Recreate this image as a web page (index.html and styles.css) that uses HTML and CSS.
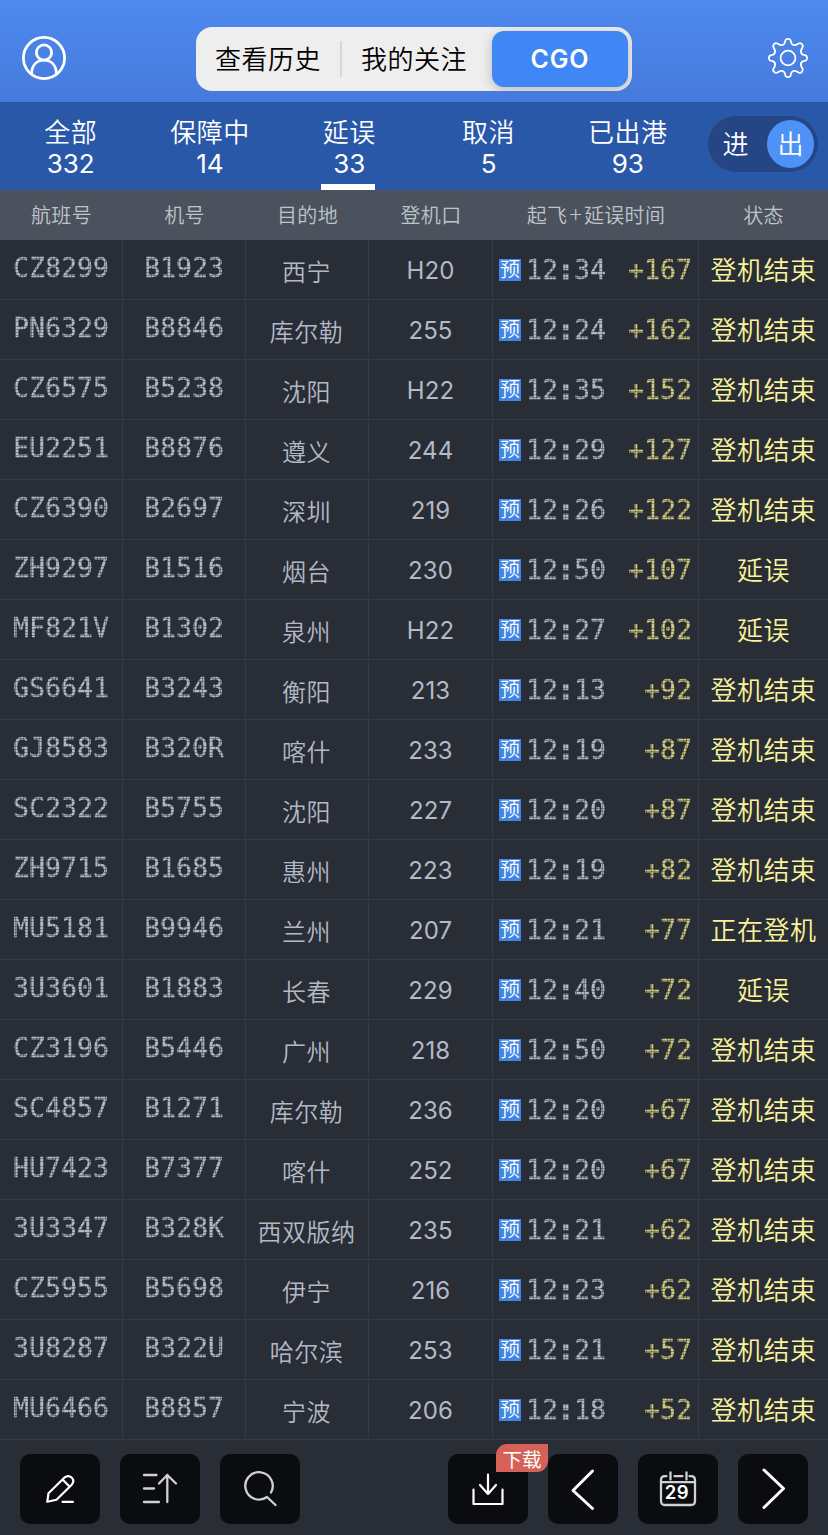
FILE: index.html
```html
<!DOCTYPE html>
<html lang="zh-CN">
<head>
<meta charset="utf-8">
<title>航班延误</title>
<link rel="stylesheet" href="styles.css">
</head>
<body>
<header class="topbar">
  <svg class="icon-user" viewBox="0 0 44 44" width="44" height="44"><circle cx="22" cy="22" r="20.6"/><circle cx="22" cy="16.500" r="7.600"/><path d="M9.500 38C10 29 15 24.200 22 24.200s12 4.800 12.500 13.800"/></svg>
  <nav class="segments">
    <span class="segment">查看历史</span>
    <span class="segment divided">我的关注</span>
    <span class="segment chosen">CGO</span>
  </nav>
  <svg class="icon-gear" viewBox="0 0 40 40" width="40" height="40"><path d="M16.6 5.3L17.4 2.4Q18 .9 20 .9T22.600 2.400L23.400 5.300Q24.500 7.500 27.800 7L30.600 5.500Q32.300 4.600 33.900 6.100T34.500 9.400L33 12.200Q32.500 15.500 34.700 16.600L37.600 17.400Q39.100 18 39.100 20T37.600 22.600L34.700 23.400Q32.500 24.500 33 27.800L34.500 30.600Q35.400 32.300 33.900 33.900T30.600 34.500L27.800 33Q24.500 32.500 23.400 34.700L22.600 37.600Q22 39.100 20 39.100T17.400 37.600L16.600 34.700Q15.500 32.500 12.200 33L9.400 34.500Q7.700 35.400 6.100 33.900T5.500 30.600L7 27.800Q7.500 24.500 5.300 23.400L2.400 22.600Q.9 22 .9 20T2.400 17.400L5.300 16.600Q7.500 15.500 7 12.200L5.500 9.400Q4.600 7.700 6.100 6.100T9.400 5.500L12.200 7Q15.500 7.500 16.600 5.300Z"/><circle cx="20" cy="20" r="7.400"/></svg>
</header>
<section class="filters">
  <div class="tabs">
    <div class="tab"><span>全部</span><b>332</b></div>
    <div class="tab"><span>保障中</span><b>14</b></div>
    <div class="tab current"><span>延误</span><b>33</b></div>
    <div class="tab"><span>取消</span><b>5</b></div>
    <div class="tab"><span>已出港</span><b>93</b></div>
  </div>
  <div class="direction"><span class="way">进</span><span class="way on">出</span></div>
</section>
<div class="columns heading">
  <span>航班号</span><span>机号</span><span>目的地</span><span>登机口</span><span>起飞<i>+</i>延误时间</span><span>状态</span>
</div>
<main id="flights"></main>
<footer class="toolbar">
  <button class="tool"><svg class="bright" viewBox="0 0 80 70" width="80" height="70"><path d="M27.300 47.700L28.500 39.200L44.500 23.500Q48.500 20.500 51.800 23.800T51.500 31L36.500 45.700L27.300 47.700ZM42.500 25.500L49.500 32.500M42.500 47.800H53"/></svg></button>
  <button class="tool"><svg class="soft" viewBox="0 0 80 70" width="80" height="70"><path d="M24 21H36.500M24 34.500H34M24 48H39M47.300 48V21M39 29.500L47.300 21L56 29.500"/></svg></button>
  <button class="tool"><svg class="soft" viewBox="0 0 80 70" width="80" height="70"><path d="M51 38.500A13.700 13.700 0 1 0 47 43L55.500 51"/></svg></button>
  <button class="tool download"><svg class="bright" viewBox="0 0 80 70" width="80" height="70"><path d="M25.500 35.500V50H54.500V35.500M40 20.500V40M32 31L40 40L48 31"/></svg><span class="badge">下载</span></button>
  <button class="tool narrow"><svg class="chevron" viewBox="0 0 70 70" width="70" height="70"><path d="M44.500 17L25 36.500L44.500 54.500"/></svg></button>
  <button class="tool"><svg class="soft" viewBox="0 0 80 70" width="80" height="70"><path d="M28.500 22.200H27Q23 22.200 23 26.200V47Q23 51 27 51H53Q57 51 57 47V26.200Q57 22.200 53 22.200H51.500M36.500 22.200H44.500M23 28.200H57M32.500 18.500V25.500M48.500 18.500V25.500"/><text x="39" y="45.200" text-anchor="middle">29</text></svg></button>
  <button class="tool narrow"><svg class="chevron" viewBox="0 0 70 70" width="70" height="70"><path d="M26 16L45.500 34.500L26 53.500"/></svg></button>
</footer>
<script src="script.js"></script>
</body>
</html>
```
FILE: styles.css
```css
* { box-sizing: border-box; }
body {
  margin: 0;
  width: 828px;
  height: 1535px;
  overflow: hidden;
  background: #292d36;
  font-family: Inter, "Noto Sans CJK SC", sans-serif;
  color: #fff;
}
svg { display: block; fill: none; stroke: #fff; stroke-linecap: round; stroke-linejoin: round; }
.topbar {
  height: 102px;
  padding: 14px 20px 0 22px;
  display: flex;
  align-items: center;
  justify-content: space-between;
  background: linear-gradient(#4e8aef, #467adc);
}
.icon-user { stroke-width: 2.8; }
.icon-gear { stroke-width: 1.8; }
.segments {
  width: 436px;
  height: 64px;
  margin-top: 2px;
  margin-right: 6px;
  display: grid;
  grid-template-columns: 144px 147px 145px;
  background: #eee;
  border-radius: 16px;
  color: #000;
  font-size: 26px;
  font-weight: 350;
  letter-spacing: .5px;
  overflow: hidden;
}
.segment { display: flex; align-items: center; justify-content: center; padding-bottom: 3px; }
.divided { border-left: 2px solid #d5d6d9; height: 36px; align-self: center; padding-right: 1px; }
.chosen {
  margin: 4px 4px 4px 5px;
  padding: 0;
  border-radius: 12px;
  background: #4086f5;
  color: #fff;
  font-weight: 600;
  font-size: 25px;
  letter-spacing: .8px;
  box-shadow: 0 3px 12px rgba(0, 0, 0, .22);
}
.filters {
  height: 88px;
  padding: 0 10px 0 1px;
  display: flex;
  align-items: center;
  justify-content: space-between;
  background: #2a58a8;
}
.tabs { display: grid; grid-template-columns: repeat(5, 139.3px); align-self: stretch; }
.tab {
  display: flex;
  flex-direction: column;
  align-items: center;
  padding-top: 14px;
  font-size: 26px;
  line-height: 33px;
  letter-spacing: .5px;
  font-weight: 350;
}
.tab b { font-weight: 400; line-height: 29px; letter-spacing: -.1px; }
.current::after { content: ""; width: 54px; height: 6px; margin: 6px 2px 0 0; background: #fff; }
.direction {
  width: 110px;
  height: 56px;
  margin-bottom: 4px;
  padding: 4px;
  display: flex;
  justify-content: space-between;
  border-radius: 28px;
  background: #254584;
  font-size: 26px;
  font-weight: 350;
}
.way { width: 47px; height: 48px; line-height: 49px; text-align: center; border-radius: 50%; }
.on { background: #4e92f7; }
.columns { display: grid; grid-template-columns: 123px 123px 123px 124px 206px 129px; }
.heading {
  height: 50px;
  padding-bottom: 2px;
  align-items: center;
  text-align: center;
  background: #4c525d;
  color: #bcc5ca;
  font-size: 20px;
  font-weight: 350;
  letter-spacing: .3px;
}
.heading i { font: 300 23px/20px "Noto Sans CJK SC", sans-serif; padding: 0 2px; }
.flight { height: 60px; border-bottom: 1px solid #363a44; color: #b3b9c6; }
.flight > * { display: flex; align-items: center; justify-content: center; border-right: 1px solid #363a44; }
.flight > :last-child { border-right: 0; }
.dots {
  font: 26.500px/30px "DejaVu Sans Mono", monospace;
  letter-spacing: .05px;
  -webkit-text-stroke: .3px currentColor;
  mask-image: repeating-linear-gradient(90deg, #000 0 2px, rgba(0, 0, 0, .6) 2px 2.660px), repeating-linear-gradient(#000 0 2px, rgba(0, 0, 0, .6) 2px 2.860px);
  mask-composite: intersect;
}
.dots b { -webkit-text-stroke-width: 1px; }
.code { padding-bottom: 3px; }
.city { font-size: 24px; font-weight: 350; letter-spacing: .5px; padding: 1px 1px 0 0; }
.gate { font-size: 24px; font-weight: 400; letter-spacing: .1px; padding-top: 2px; }
.flight .time { justify-content: flex-start; padding: 1px 6px 0 6px; }
.mark {
  width: 22px;
  height: 22px;
  margin-right: 5px;
  background: #4086e8;
  color: #fff;
  font-size: 20px;
  font-weight: 350;
  line-height: 23px;
  text-align: center;
}
.late { margin-left: auto; color: #d3cb7c; }
.state { color: #fbf49c; font-size: 26px; font-weight: 350; letter-spacing: .5px; padding-bottom: 2px; }
.toolbar { height: 95px; padding: 14px 20px 0; display: flex; gap: 20px; }
.tool {
  width: 80px;
  height: 70px;
  padding: 0;
  border: 0;
  border-radius: 10px;
  background: #0b0c0f;
  color: #fff;
}
.narrow { width: 70px; }
.download { margin-left: auto; position: relative; }
.badge {
  position: absolute;
  top: -10px;
  right: -20px;
  z-index: 1;
  width: 52px;
  height: 28px;
  border-radius: 11px 0 11px 0;
  background: #d66158;
  font: 400 19.500px/29px "Noto Sans CJK SC", sans-serif;
}
.bright { stroke-width: 2.2; }
.soft { stroke: #d0d1d4; stroke-width: 2.300; }
.soft text { fill: #fff; stroke: none; font: 600 18.500px Inter, sans-serif; letter-spacing: .5px; }
.chevron { stroke-width: 3; }
```
FILE: script.js
```javascript
const flights = `CZ8299 B1923 西宁 H20 12:34 +167 登机结束
PN6329 B8846 库尔勒 255 12:24 +162 登机结束
CZ6575 B5238 沈阳 H22 12:35 +152 登机结束
EU2251 B8876 遵义 244 12:29 +127 登机结束
CZ6390 B2697 深圳 219 12:26 +122 登机结束
ZH9297 B1516 烟台 230 12:50 +107 延误
MF821V B1302 泉州 H22 12:27 +102 延误
GS6641 B3243 衡阳 213 12:13 +92 登机结束
GJ8583 B320R 喀什 233 12:19 +87 登机结束
SC2322 B5755 沈阳 227 12:20 +87 登机结束
ZH9715 B1685 惠州 223 12:19 +82 登机结束
MU5181 B9946 兰州 207 12:21 +77 正在登机
3U3601 B1883 长春 229 12:40 +72 延误
CZ3196 B5446 广州 218 12:50 +72 登机结束
SC4857 B1271 库尔勒 236 12:20 +67 登机结束
HU7423 B7377 喀什 252 12:20 +67 登机结束
3U3347 B328K 西双版纳 235 12:21 +62 登机结束
CZ5955 B5698 伊宁 216 12:23 +62 登机结束
3U8287 B322U 哈尔滨 253 12:21 +57 登机结束
MU6466 B8857 宁波 206 12:18 +52 登机结束`;

document.getElementById("flights").innerHTML = flights.split("\n").map((line) => {
  const [number, plane, city, gate, time, late, state] = line.split(" ");
  const clock = time.replace(":", "<b>:</b>");
  return `<div class="columns flight">
    <div class="code"><span class="dots">${number}</span></div>
    <div class="code"><span class="dots">${plane}</span></div>
    <div class="city">${city}</div>
    <div class="gate">${gate}</div>
    <div class="time"><span class="mark">预</span><span class="dots">${clock}</span><span class="dots late">${late}</span></div>
    <div class="state">${state}</div>
  </div>`;
}).join("");
```
